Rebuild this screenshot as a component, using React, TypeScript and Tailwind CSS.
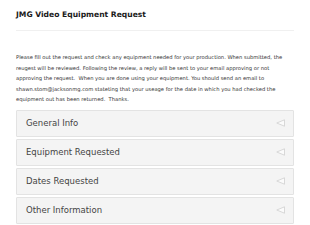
export default function App() {
  const sections = ["General Info", "Equipment Requested", "Dates Requested", "Other Information"];

  return (
    <div className="w-[310px] h-[225px] overflow-hidden bg-white px-4 font-['DejaVu_Sans',Verdana,sans-serif]">
      {/* Header */}
      <div className="pt-[10px] pb-[10px] border-b border-[#f0f0f0]">
        <h1 className="text-[7.6px] leading-[10px] font-bold text-[#1a1a1a]">JMG Video Equipment Request</h1>
      </div>

      {/* Intro copy */}
      <p className="mt-[21px] text-[5.2px] leading-[10.5px] text-[#333] whitespace-nowrap">
        Please fill out the request and check any equipment needed for your production. When submitted, the
        <br />
        reugest will be reviewed. Following the review, a reply will be sent to your email approving or not
        <br />
        approving the request.&nbsp; When you are done using your equipment. You should send an email to
        <br />
        shawn.stom@jacksonmg.com stateting that your useage for the date in which you had checked the
        <br />
        equipment out has been returned.&nbsp; Thanks.
      </p>

      {/* Accordion */}
      <div className="mt-[5px] flex flex-col gap-[2px]">
        {sections.map((s) => (
          <div
            key={s}
            className="h-[27px] flex items-center justify-between bg-[#f4f4f4] border border-[#e3e3e3] rounded-[1px] pl-[9px] pr-[8px]"
          >
            <span className="text-[8.5px] text-[#444]">{s}</span>
            <svg width="9" height="8" viewBox="0 0 9 8" className="block">
              <path d="M8.5 0.8 L0.8 4 L8.5 7.2 Z" fill="#fbfbfb" stroke="#cfcfcf" strokeWidth="0.8" strokeLinejoin="round" />
            </svg>
          </div>
        ))}
      </div>
    </div>
  );
}
